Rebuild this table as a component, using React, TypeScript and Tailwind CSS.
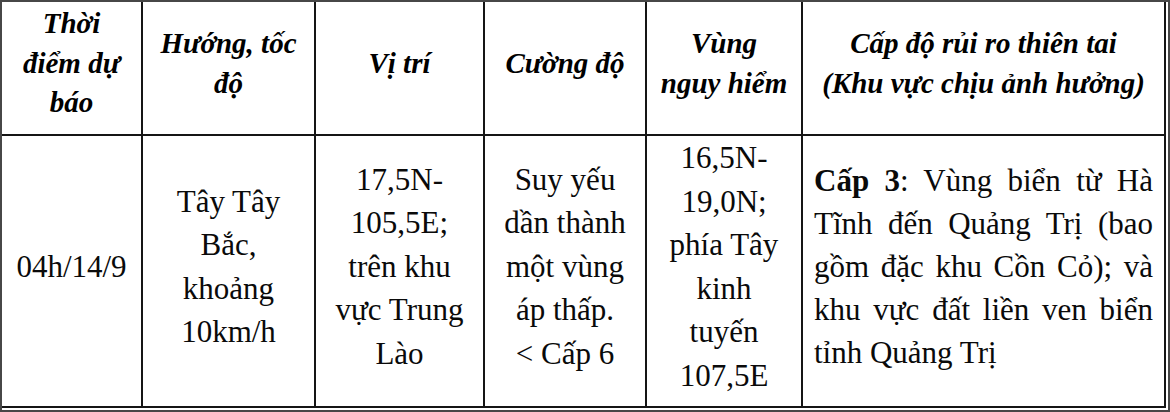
import React from "react";

const serif = "font-['Liberation_Serif','Times_New_Roman',serif]";

function HeadCell({ lines, last }: { lines: string[]; last?: boolean }) {
  return (
    <div
      className={`flex flex-col items-center justify-center pb-[9px] border-b-2 border-[#151515] ${last ? "" : "border-r-2"} text-[29px] leading-[39.5px] font-bold italic text-black text-center`}
    >
      {lines.map((l, i) => (
        <div key={i} className="whitespace-nowrap">
          {l}
        </div>
      ))}
    </div>
  );
}

function BodyCell({ lines }: { lines: string[] }) {
  return (
    <div className="flex flex-col items-center justify-center pb-[9px] border-r-2 border-[#151515] text-[31px] leading-[43.5px] text-[#0a0a0a] text-center">
      {lines.map((l, i) => (
        <div key={i} className="whitespace-nowrap">
          {l}
        </div>
      ))}
    </div>
  );
}

export default function App() {
  const justLine = "text-justify [text-align-last:justify] whitespace-nowrap";
  return (
    <div
      className={`${serif} w-[1170px] h-[412px] bg-white border-2 border-[#474747] pr-[2px] pb-[2px] overflow-hidden`}
    >
      <div className="grid h-full grid-cols-[141px_173px_169px_162px_156px_1fr] grid-rows-[134px_1fr] border-r-2 border-b-2 border-[#151515]">
        <HeadCell lines={["Thời", "điểm dự", "báo"]} />
        <HeadCell lines={["Hướng, tốc", "độ"]} />
        <HeadCell lines={["Vị trí"]} />
        <HeadCell lines={["Cường độ"]} />
        <HeadCell lines={["Vùng", "nguy hiểm"]} />
        <HeadCell
          lines={["Cấp độ rủi ro thiên tai", "(Khu vực chịu ảnh hưởng)"]}
          last
        />

        <BodyCell lines={["04h/14/9"]} />
        <BodyCell lines={["Tây Tây", "Bắc,", "khoảng", "10km/h"]} />
        <BodyCell lines={["17,5N-", "105,5E;", "trên khu", "vực Trung", "Lào"]} />
        <BodyCell
          lines={["Suy yếu", "dần thành", "một vùng", "áp thấp.", "< Cấp 6"]}
        />
        <BodyCell
          lines={["16,5N-", "19,0N;", "phía Tây", "kinh", "tuyến", "107,5E"]}
        />
        <div className="flex flex-col justify-center pb-[9px] px-[11px] text-[31px] leading-[43px] text-[#0a0a0a]">
          <div className={justLine}>
            <span className="font-bold">Cấp 3</span>: Vùng biển từ Hà
          </div>
          <div className={justLine}>Tĩnh đến Quảng Trị (bao</div>
          <div className={justLine}>gồm đặc khu Cồn Cỏ); và</div>
          <div className={justLine}>khu vực đất liền ven biển</div>
          <div className="whitespace-nowrap text-left">tỉnh Quảng Trị</div>
        </div>
      </div>
    </div>
  );
}
